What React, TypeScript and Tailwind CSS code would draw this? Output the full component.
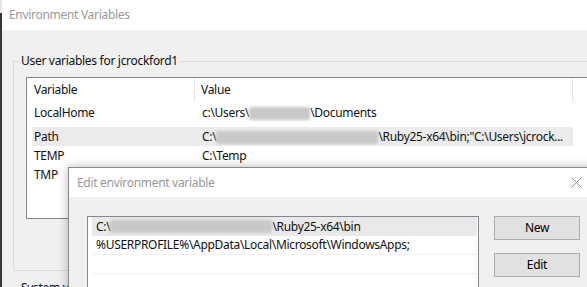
import React from 'react'

/** Grey smudge standing in for the redacted parts of a path. */
function Redacted({ width }: { width: number }) {
  return (
    <span
      className="inline-block h-[13px] align-middle bg-[#c8c8c8] blur-[1.5px] rounded-[2px]"
      style={{ width }}
    />
  )
}

interface VarRow {
  name: string
  value: React.ReactNode
  selected?: boolean
}

const userVars: VarRow[] = [
  {
    name: 'Path',
    selected: true,
    value: (
      <>
        C:\<Redacted width={162} />\Ruby25-x64\bin;"C:\Users\jcrock...
      </>
    ),
  },
  { name: 'TEMP', value: 'C:\\Temp' },
  { name: 'TMP', value: '' },
]

function CloseGlyph() {
  return (
    <svg width="11" height="11" viewBox="0 0 11 11" className="shrink-0">
      <path d="M0.5 0.5 L10.5 10.5 M10.5 0.5 L0.5 10.5" stroke="#8f8f8f" strokeWidth="1" fill="none" />
    </svg>
  )
}

function EditDialog() {
  return (
    <div className="absolute left-[68px] top-[167px] w-[533px] h-[160px] border border-[#8a8a8a] bg-[#f0f0f0] shadow-[0_0_10px_rgba(0,0,0,0.28)] flex flex-col">
      {/* title bar */}
      <div className="h-[29px] bg-white flex items-center pl-[8px] pr-[18px] shrink-0">
        <span className="flex-1 text-[#999999]">Edit environment variable</span>
        <CloseGlyph />
      </div>

      {/* client */}
      <div className="flex pl-[18px] pt-[19px] gap-[15px]">
        <div className="w-[392px] h-[120px] border border-[#828790] bg-white pl-[4px] pr-[1px]">
          <div className="h-[19px] bg-[#e9e9e9] pl-[4px] flex items-center whitespace-nowrap">
            C:\<Redacted width={162} />\Ruby25-x64\bin
          </div>
          <div className="h-[19px] pl-[4px] flex items-center border-b border-[#f0f0f0] whitespace-nowrap">
            %USERPROFILE%\AppData\Local\Microsoft\WindowsApps;
          </div>
          <div className="h-[19px] border-b border-[#f0f0f0]" />
          <div className="h-[19px] border-b border-[#f0f0f0]" />
        </div>

        <div className="flex flex-col gap-[13px]">
          <button className="w-[86px] h-[24px] border border-[#adadad] bg-[#e1e1e1] text-black">New</button>
          <button className="w-[86px] h-[24px] border border-[#adadad] bg-[#e1e1e1] text-black">Edit</button>
        </div>
      </div>
    </div>
  )
}

export default function App() {
  return (
    <div className="relative w-[587px] h-[287px] overflow-hidden flex bg-[#f0f0f0] text-[12px] leading-[16px] tracking-[-0.3px] text-[#111111] font-['Noto_Sans',sans-serif]">
      {/* desktop edge behind the window */}
      <div className="w-[2px] shrink-0 flex flex-col">
        <div className="h-[13px] bg-[#e6e6e6]" />
        <div className="flex-1 bg-[#3a3434]" />
      </div>

      {/* Environment Variables window */}
      <div className="flex-1 flex flex-col min-w-0">
        <div className="h-[30px] bg-white flex items-center pl-[7px] shrink-0">
          <span className="text-[#999999]">Environment Variables</span>
        </div>

        <div className="flex-1 pl-[11px] pt-[23px]">
          <fieldset className="w-[600px] h-[218px] border border-[#dcdcdc] pl-[12px] pr-0">
            <legend className="ml-[-7px] px-[2px]">User variables for jcrockford1</legend>

            <div className="mt-[8px] w-[580px] h-[142px] border border-[#828790] bg-white">
              {/* header */}
              <div className="h-[24px] flex items-center pl-[5px]">
                <div className="w-[163px] h-full flex items-center pl-[2px] border-r border-[#e5e5e5]">Variable</div>
                <div className="w-[378px] h-full flex items-center pl-[6px] border-r border-[#e5e5e5]">Value</div>
              </div>

              <div className="h-[21px] flex items-center pl-[5px]">
                <div className="w-[163px] pl-[2px]">LocalHome</div>
                <div className="w-[378px] pl-[7px] whitespace-nowrap">
                  c:\Users\<Redacted width={61} />\Documents
                </div>
              </div>

              <div className="mt-[4px]">
                {userVars.map(v => (
                  <div
                    key={v.name}
                    className={`h-[19px] ml-[5px] w-[541px] flex items-center ${v.selected ? 'bg-[#ebebeb]' : ''}`}
                  >
                    <div className="w-[163px] pl-[2px]">{v.name}</div>
                    <div className="flex-1 pl-[7px] whitespace-nowrap overflow-hidden">{v.value}</div>
                  </div>
                ))}
              </div>
            </div>
          </fieldset>

          <fieldset className="mt-[9px] w-[600px] h-[40px] border border-[#dcdcdc] pl-[12px]">
            <legend className="ml-[-7px] px-[2px]">System variables</legend>
          </fieldset>
        </div>
      </div>

      <EditDialog />
    </div>
  )
}
